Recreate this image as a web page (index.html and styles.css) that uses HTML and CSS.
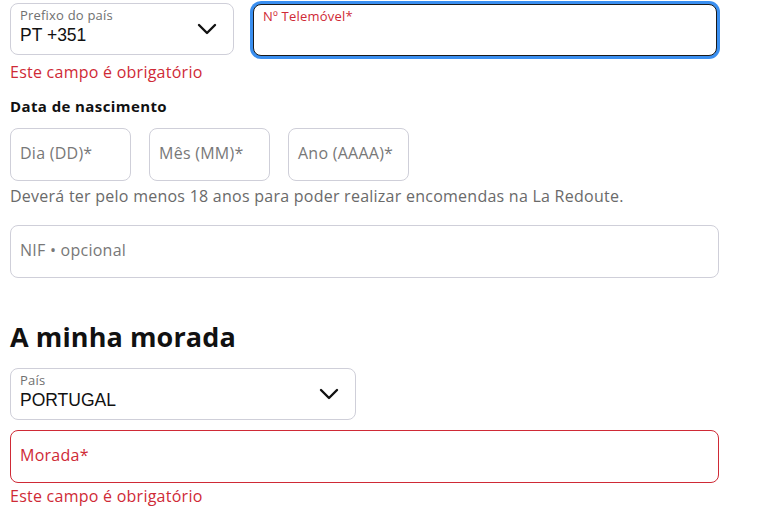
FILE: index.html
```html
<!DOCTYPE html>
<html lang="pt">
<head>
<meta charset="utf-8">
<link rel="stylesheet" href="styles.css">
</head>
<body>
<div class="form">
  <div class="row-phone">
    <div class="select select-prefix">
      <div class="select-text">
        <span class="float-label">Prefixo do país</span>
        <span class="select-value">PT +351</span>
      </div>
      <svg class="chevron" width="20" height="12" viewBox="0 0 20 12"><path d="M2 2 L10 10 L18 2" fill="none" stroke="#111" stroke-width="2.4" stroke-linecap="round" stroke-linejoin="round"/></svg>
    </div>
    <div class="field field-focus">
      <span class="float-label label-error">Nº Telemóvel*</span>
    </div>
  </div>
  <div class="error error-first">Este campo é obrigatório</div>

  <div class="section-label">Data de nascimento</div>
  <div class="row-date">
    <div class="field field-date"><span class="placeholder">Dia (DD)*</span></div>
    <div class="field field-date"><span class="placeholder">Mês (MM)*</span></div>
    <div class="field field-date"><span class="placeholder">Ano (AAAA)*</span></div>
  </div>
  <div class="helper">Deverá ter pelo menos 18 anos para poder realizar encomendas na La Redoute.</div>

  <div class="field field-full field-nif"><span class="placeholder">NIF • opcional</span></div>

  <h2 class="heading">A minha morada</h2>

  <div class="select select-country">
    <div class="select-text">
      <span class="float-label">País</span>
      <span class="select-value">PORTUGAL</span>
    </div>
    <svg class="chevron" width="20" height="12" viewBox="0 0 20 12"><path d="M2 2 L10 10 L18 2" fill="none" stroke="#111" stroke-width="2.4" stroke-linecap="round" stroke-linejoin="round"/></svg>
  </div>

  <div class="field field-full field-invalid"><span class="placeholder placeholder-error">Morada*</span></div>
  <div class="error error-last">Este campo é obrigatório</div>
</div>
</body>
</html>
```

FILE: styles.css
```css
html, body {
  margin: 0;
  padding: 0;
  background: #ffffff;
}

body {
  font-family: "Open Sans", "DejaVu Sans", sans-serif;
  color: #1a1a1a;
}

.form {
  width: 708px;
  padding-left: 10px;
  padding-top: 3px;
}

.row-phone {
  display: flex;
  align-items: flex-start;
  gap: 19px;
}

.select {
  box-sizing: border-box;
  height: 52px;
  border: 1px solid #cfcfd9;
  border-radius: 8px;
  display: flex;
  align-items: center;
  justify-content: space-between;
  padding: 0 16px 0 9px;
  background: #fff;
}

.select-prefix {
  width: 224px;
}

.select-country {
  width: 346px;
  margin-top: 13px;
}

.select-text {
  align-self: flex-start;
  display: flex;
  flex-direction: column;
  gap: 2px;
  padding-top: 4px;
}

.float-label {
  font-size: 13px;
  line-height: 14px;
  color: #707070;
  letter-spacing: 0.2px;
}

.select-value {
  font-family: "Liberation Sans", Arial, sans-serif;
  font-size: 17.5px;
  line-height: 22px;
  color: #111;
}

.chevron {
  display: block;
}

.field {
  box-sizing: border-box;
  height: 53px;
  border: 1px solid #cfcfd9;
  border-radius: 8px;
  display: flex;
  align-items: center;
  padding: 0 9px 3px 9px;
  background: #fff;
}

.field-focus {
  flex: 1;
  height: 52px;
  margin-top: 1px;
  border: 1px solid #1a1a1a;
  box-shadow: 0 0 0 3px #3a8ff0;
  align-items: flex-start;
  padding-top: 4px;
  margin-right: 1px;
}

.label-error {
  color: #cf2a36;
}

.error {
  font-size: 16px;
  line-height: 20px;
  letter-spacing: 0.25px;
  color: #cf2a36;
}

.error-first {
  margin-top: 6px;
}

.error-last {
  margin-top: 3px;
}

.section-label {
  margin-top: 14px;
  font-size: 15px;
  line-height: 20px;
  font-weight: 700;
  letter-spacing: 0.4px;
  color: #111;
}

.row-date {
  margin-top: 12px;
  display: flex;
  gap: 18px;
}

.field-date {
  width: 121px;
}

.placeholder {
  font-size: 16px;
  letter-spacing: 0.25px;
  color: #787878;
}

.placeholder-error {
  color: #cf2a36;
}

.helper {
  margin-top: 5px;
  font-size: 16px;
  line-height: 20px;
  letter-spacing: 0.25px;
  color: #6a6a6a;
}

.field-full {
  width: 709px;
}

.field-nif {
  margin-top: 19px;
}

.heading {
  margin: 41px 0 0 0;
  font-size: 27px;
  line-height: 36px;
  font-weight: 700;
  letter-spacing: 0.1px;
  color: #111;
}

.field-invalid {
  margin-top: 10px;
  border-color: #cf2a36;
}
```
